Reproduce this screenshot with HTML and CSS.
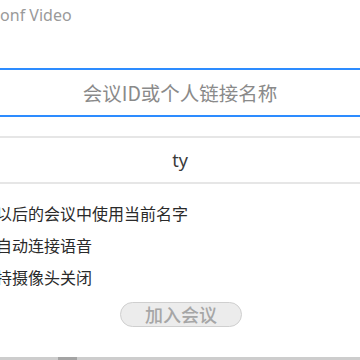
FILE: index.html
```html
<!DOCTYPE html>
<html lang="zh">
<head>
<meta charset="utf-8">
<title>Conf Video</title>
<link rel="stylesheet" href="styles.css">
</head>
<body>
<div class="window">
  <div class="title">Conf Video</div>
  <div class="meeting-id">
    <input class="id-input" type="text" placeholder="会议ID或个人链接名称">
  </div>
  <div class="name-field">ty</div>
  <ul class="options">
    <li>在以后的会议中使用当前名字</li>
    <li>不自动连接语音</li>
    <li>保持摄像头关闭</li>
  </ul>
  <div class="actions">
    <button class="join" type="button">加入会议</button>
  </div>
  <div class="scrollbar"><span class="thumb"></span></div>
</div>
</body>
</html>
```
FILE: styles.css
```css
html, body {
  margin: 0;
  padding: 0;
  background: #ffffff;
  width: 360px;
  height: 360px;
  overflow: hidden;
}
.window {
  width: 360px;
  height: 360px;
  display: flex;
  flex-direction: column;
  font-family: "Noto Sans CJK SC", "Noto Sans", sans-serif;
  position: relative;
}
.title {
  margin: 4px 0 0 -10px;
  height: 22px;
  font-family: "Noto Sans", "Noto Sans CJK SC", sans-serif;
  font-size: 16px;
  line-height: 22px;
  color: #9a9a9a;
}
.meeting-id {
  margin: 42px -4px 0 -4px;
  border-top: 2px solid #2d8cff;
  border-bottom: 2px solid #2d8cff;
  height: 45px;
  display: flex;
}
.id-input {
  flex: 1;
  border: none;
  outline: none;
  background: transparent;
  text-align: center;
  font-family: "Noto Sans CJK SC", sans-serif;
  font-size: 19.5px;
  color: #333;
  padding: 0;
}
.id-input::placeholder {
  color: #8a8a8a;
}
.name-field {
  margin-top: 19px;
  border-top: 2px solid #e6e6e6;
  border-bottom: 2px solid #e6e6e6;
  height: 44px;
  display: flex;
  align-items: center;
  justify-content: center;
  font-family: "Noto Sans", sans-serif;
  font-size: 18px;
  color: #3a3a3a;
}
.options {
  list-style: none;
  margin: 18px 0 0 -20px;
  padding: 0;
  display: flex;
  flex-direction: column;
  gap: 10px;
  font-size: 16px;
  line-height: 22px;
  color: #2a2a2a;
}
.actions {
  display: flex;
  justify-content: center;
  margin-top: 14px;
  padding-left: 2px;
}
.join {
  width: 122px;
  height: 25px;
  border: 1px solid #cfcfcf;
  border-radius: 13px;
  background: #ececec;
  color: #a6a6a6;
  font-family: "Noto Sans CJK SC", sans-serif;
  font-size: 18px;
  font-weight: 500;
  line-height: 23px;
  padding: 0;
}
.scrollbar {
  margin-top: auto;
  height: 3px;
  background: #cdcdcd;
  position: relative;
}
.thumb {
  position: absolute;
  left: 58px;
  top: 0;
  width: 19px;
  height: 3px;
  background: #a4a4a4;
}
```
